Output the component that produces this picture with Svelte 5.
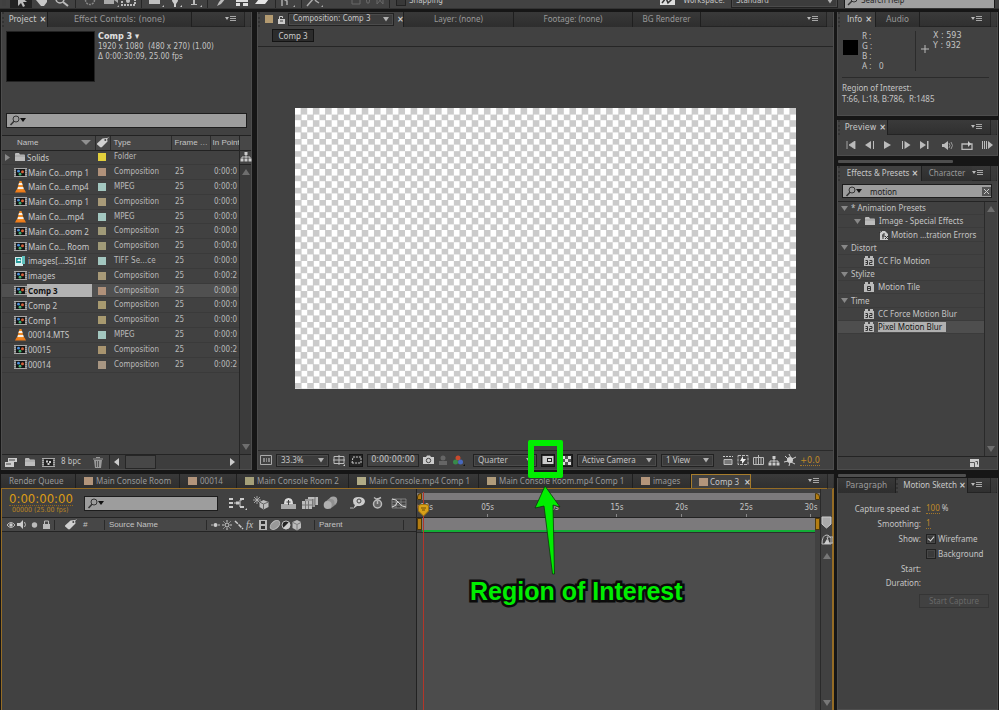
<script>
  const items = [
    { name: 'Solids', icon: 'folder', tag: '#e2cf3c', type: 'Folder', fps: '', start: '' },
    { name: 'Main Co…omp 1', icon: 'comp', tag: '#b0917a', type: 'Composition', fps: '25', start: '0:00:0' },
    { name: 'Main Co…e.mp4', icon: 'cone', tag: '#a3c7c0', type: 'MPEG', fps: '25', start: '0:00:0' },
    { name: 'Main Co…omp 1', icon: 'comp', tag: '#a89a78', type: 'Composition', fps: '25', start: '0:00:0' },
    { name: 'Main Co….mp4', icon: 'cone', tag: '#a3c7c0', type: 'MPEG', fps: '25', start: '0:00:0' },
    { name: 'Main Co…oom 2', icon: 'comp', tag: '#a09a78', type: 'Composition', fps: '25', start: '0:00:0' },
    { name: 'Main Co… Room', icon: 'comp', tag: '#a09a78', type: 'Composition', fps: '25', start: '0:00:0' },
    { name: 'images[…35].tif', icon: 'tif', tag: '#a3c7c0', type: 'TIFF Se…ce', fps: '25', start: '0:00:0' },
    { name: 'images', icon: 'comp', tag: '#a89a78', type: 'Composition', fps: '25', start: '0:00:2' },
    { name: 'Comp 3', icon: 'comp', tag: '#b0917a', type: 'Composition', fps: '25', start: '0:00:0', selected: true },
    { name: 'Comp 2', icon: 'comp', tag: '#a89a70', type: 'Composition', fps: '25', start: '0:00:0' },
    { name: 'Comp 1', icon: 'comp', tag: '#a89a70', type: 'Composition', fps: '25', start: '0:00:0' },
    { name: '00014.MTS', icon: 'cone', tag: '#a3c7c0', type: 'MPEG', fps: '25', start: '0:00:0' },
    { name: '00015', icon: 'comp', tag: '#a8946f', type: 'Composition', fps: '25', start: '0:00:2' },
    { name: '00014', icon: 'comp', tag: '#a89682', type: 'Composition', fps: '25', start: '0:00:2' }
  ];
  const effects = [
    { label: '* Animation Presets', depth: 0, icon: '' },
    { label: 'Image - Special Effects', depth: 1, icon: 'folder' },
    { label: 'Motion …tration Errors', depth: 3, icon: 'preset' },
    { label: 'Distort', depth: 0, icon: '' },
    { label: 'CC Flo Motion', depth: 2, icon: '32' },
    { label: 'Stylize', depth: 0, icon: '' },
    { label: 'Motion Tile', depth: 2, icon: '8' },
    { label: 'Time', depth: 0, icon: '' },
    { label: 'CC Force Motion Blur', depth: 2, icon: '32' },
    { label: 'Pixel Motion Blur', depth: 2, icon: '32', selected: true }
  ];
  const comps = [
    { label: 'Render Queue', width: 75 },
    { label: 'Main Console Room', width: 104, tag: '#b3957b' },
    { label: '00014', width: 57, tag: '#b3957b' },
    { label: 'Main Console Room 2', width: 112, tag: '#a5a079' },
    { label: 'Main Console.mp4 Comp 1', width: 130, tag: '#b1ab86' },
    { label: 'Main Console Room.mp4 Comp 1', width: 154, tag: '#b19c7b' },
    { label: 'images', width: 58, tag: '#b3957b' }
  ];
  const ticks = ['0:00s', '05s', '10s', '15s', '20s', '25s', '30s'];
</script>

{#snippet menu()}
  <button class="menu" aria-label="Panel menu">
    <svg width="12" height="8" viewBox="0 0 12 8"><path d="M0 2h4L2 5z" fill="#bbb" /><path d="M5 1h6v1H5zM5 3h6v1H5zM5 5h6v1H5z" fill="#a6a6a6" /></svg>
  </button>
  <i class="grip end"></i>
{/snippet}

{#snippet lens()}
  <svg class="lens" width="20" height="11" viewBox="0 0 20 11"><circle cx="7" cy="4" r="3" fill="none" stroke="#333" /><path d="M5 6.3L1.500 10" stroke="#333" stroke-width="1.500" /><path d="M11 3h6l-3 4z" fill="#111" /></svg>
{/snippet}

{#snippet folder()}
  <svg width="12" height="10" viewBox="0 0 12 10"><path d="M1 2q0-1 1-1h3l1 1.500h4q1 0 1 1V9H1z" fill="#bcbcbc" /><path d="M1 4h10" stroke="#8a8a8a" stroke-width=".6" /></svg>
{/snippet}

{#snippet film()}
  <svg width="13" height="11" viewBox="0 0 13 11"><path d="M0 1h13v9H0z" fill="#a8a8a8" /><path d="M2 2h9v7H2z" fill="#141414" /><path d="M1 2v8M12 2v8" stroke="#555" stroke-dasharray="1 1" /><circle cx="4.500" cy="4.200" r="1.400" fill="#4b8fdc" /><circle cx="8.500" cy="4.800" r="1.500" fill="#d2603a" /><circle cx="6" cy="7.200" r="1.400" fill="#3fae6c" /></svg>
{/snippet}

{#snippet fileIcon(kind)}
  {#if kind === 'folder'}
    {@render folder()}
  {:else if kind === 'comp'}
    {@render film()}
  {:else if kind === 'cone'}
    <svg width="13" height="13" viewBox="0 0 13 13"><path d="M2.500 9.500h8l1.500 3H1z" fill="#ee7c1a" /><path d="M5.500 1h2l2.500 9q-3.500 1.500-7 0z" fill="#f08a24" /><path d="M5 3h3l.6 2H4.400zM4 7h5.200l.5 2H3.400z" fill="#f4efe8" /></svg>
  {:else}
    <svg width="13" height="12" viewBox="0 0 13 12"><path d="M1 2h8v9H1z" fill="#d8eeee" /><path d="M2 3h5v5H2z" fill="#269a9a" /><path d="M8 1h3v8H8z" fill="#5fc0bc" /><path d="M3 6l2-2 2 2z" fill="#fff" /></svg>
  {/if}
{/snippet}

{#snippet tagIcon()}
  <svg width="13" height="11" viewBox="0 0 13 11"><path d="M1 6.500L6.500 1.500 11 1l.5 3.500L6 10q-1 .8-2 0L1.200 7.500z" fill="#d0d0d0" /><circle cx="9.300" cy="3" r="1" fill="#444" /><path d="M10 2.500L12.500.500" stroke="#ccc" stroke-width=".8" /></svg>
{/snippet}

{#snippet tree()}
  <svg width="12" height="11" viewBox="0 0 12 11"><path d="M4.500 1h3v3h-3zM.500 7.500h3v3h-3zM8.500 7.500h3v3h-3zM4.500 7.500h3v3h-3z" fill="#ccc" /><path d="M6 4v3M2 7.500V6h8v1.500" fill="none" stroke="#ccc" /></svg>
{/snippet}

{#snippet drop(label, options, cls)}
  <span class="drop {cls}">
    <select aria-label={label}>
      {#each options as o}<option>{o}</option>{/each}
    </select>
    <svg width="8" height="5" viewBox="0 0 8 5"><path d="M1 0h6L4 4.500z" fill="#b0b0b0" /></svg>
  </span>
{/snippet}

<div class="app">
  <header class="toolbar">
    <div class="tools">
      <i class="grip"></i>
      <button class="on" aria-label="Selection"><svg width="20" height="16"><path d="M7 1v12l3-3 2 4 2-1-2-4h4z" fill="#bdbdbd" /></svg></button>
      <button aria-label="Hand"><svg width="20" height="16"><path d="M5 3l10-1v7l-3 4H9L4 7z" fill="#c8c8c8" /></svg></button>
      <button aria-label="Zoom"><svg width="20" height="16"><circle cx="8" cy="6" r="4" fill="none" stroke="#bbb" stroke-width="1.500" /><path d="M11 9l5 4" stroke="#bbb" stroke-width="2" /></svg></button>
      <hr />
      <button aria-label="Rotate"><svg width="24" height="16"><circle cx="12" cy="7" r="4.500" fill="none" stroke="#888" stroke-width="1.500" stroke-dasharray="2 1" /></svg></button>
      <button aria-label="Camera"><svg width="18" height="16"><path d="M2 4h10v7H2zM12 7l4-2v5zM15 14h2v-2z" fill="#aaa" /></svg></button>
      <button aria-label="Pan behind"><svg width="18" height="16"><path d="M2 4h13v8H2z" fill="none" stroke="#bbb" stroke-width="2" stroke-dasharray="2 1" /><circle cx="8" cy="8" r="2" fill="#bbb" /></svg></button>
      <hr />
      <button aria-label="Rectangle"><svg width="22" height="16"><path d="M5 4h11v7H5zM18 14h2v-2z" fill="#c0c0c0" /></svg></button>
      <button aria-label="Pen"><svg width="18" height="16"><path d="M7 2h4l1 6-2 3v3H8v-3L6 8zM14 14h2v-2z" fill="#ccc" /></svg></button>
      <button aria-label="Type"><svg width="20" height="16"><path d="M9 2h2v9h2v1H7v-1h2zM16 14h2v-2z" fill="#bbb" /></svg></button>
      <hr />
      <button aria-label="Brush"><svg width="22" height="16"><path d="M14 3l2 2-5 6-4 2 2-4z" fill="#bbb" /></svg></button>
      <button aria-label="Clone stamp"><svg width="20" height="16"><path d="M4 6h12v3H4zM4 10h4v3H4zM11 10h5v3h-5z" fill="#ddd" /></svg></button>
      <button aria-label="Eraser"><svg width="20" height="16"><path d="M7 6h10l-4 5H3z" fill="#e5e5e5" /></svg></button>
      <hr />
      <button aria-label="Roto brush"><svg width="20" height="16"><path d="M4 13V5l5 3v4M10 3l2 3" fill="none" stroke="#aaa" stroke-width="1.500" /><path d="M15 14h2v-2z" fill="#aaa" /></svg></button>
      <hr />
      <button aria-label="Puppet pin"><svg width="20" height="16"><path d="M3 13l7-8 2 3 3 2" fill="none" stroke="#aaa" stroke-width="1.500" /><path d="M17 14h2v-2z" fill="#aaa" /></svg></button>
      <span class="axes"><svg width="36" height="16"><path d="M2 5h8v6H2zM16 5h4l-1 5h-2zM27 4l6 7v-7l-6 7z" fill="none" stroke="#686868" /></svg></span>
      <hr />
      <label class="snap"><input type="checkbox" /> Snapping</label>
      <span class="fill"></span>
      <button aria-label="Sync"><svg width="18" height="16"><path d="M1 3h15v9H1z" fill="#ddd" /><path d="M3 10l4-5 2 5 4-4" fill="none" stroke="#333" stroke-width="1.500" /></svg></button>
      <label class="ws" for="workspace">Workspace:</label>
      <span class="drop workspace">
        <select id="workspace"><option>Standard</option></select>
        <svg width="8" height="5" viewBox="0 0 8 5"><path d="M1 0h6L4 4.500z" fill="#b0b0b0" /></svg>
      </span>
      <div class="help">
        <svg width="14" height="12"><circle cx="9" cy="4" r="3" fill="none" stroke="#333" /><path d="M7 6l-4 4" stroke="#333" stroke-width="1.500" /></svg>
        <input type="text" value="Search Help" aria-label="Search Help" />
      </div>
    </div>
  </header>

  <main>
    <div class="work">
      <div class="upper">
        <section class="panel project">
          <nav class="tabs">
            <i class="grip"></i>
            <button class="tab on first">Project <b>×</b></button>
            <button class="tab fx-controls">Effect Controls: (none)</button>
            <span class="fill"></span>
            {@render menu()}
          </nav>
          <div class="summary">
            <div class="thumb"></div>
            <div>
              <strong>Comp 3 ▾</strong>
              <p>1920 x 1080&nbsp; (480 x 270) (1.00)</p>
              <p>Δ 0:00:30:09, 25.00 fps</p>
            </div>
          </div>
          <div class="field find">{@render lens()}<input type="text" aria-label="Search project" /></div>
          <div class="listing">
            <div class="rows">
              <table>
                <colgroup><col class="c-name" /><col class="c-tag" /><col class="c-type" /><col class="c-fps" /><col class="c-in" /></colgroup>
                <thead>
                  <tr>
                    <th><span class="namehead">Name <svg width="10" height="5"><path d="M0 0h10L5 5z" fill="#909090" /></svg></span></th>
                    <th>{@render tagIcon()}</th><th>Type</th><th>Frame …</th><th>In Point</th>
                  </tr>
                </thead>
                <tbody>
                  {#each items as it}
                    <tr class:selected={it.selected}>
                      <td>
                        <span class="entry">
                          <span class="twist">{#if it.icon === 'folder'}<svg width="5" height="7"><path d="M0 0l5 3.500L0 7z" fill="#888" /></svg>{/if}</span>
                          {@render fileIcon(it.icon)}
                          <span class="label">{it.name}</span>
                        </span>
                      </td>
                      <td><i class="swatch" style:background={it.tag}></i></td>
                      <td>{it.type}</td>
                      <td>{it.fps}</td>
                      <td>{it.start}</td>
                    </tr>
                  {/each}
                </tbody>
              </table>
            </div>
            <div class="vscroll">
              <div class="headcap"></div>
              <div class="flow">{@render tree()}</div>
              <div class="track"><svg width="8" height="6"><path d="M0 6h8L4 0z" fill="#6e6e6e" /></svg><svg width="8" height="6"><path d="M0 0h8L4 6z" fill="#6e6e6e" /></svg></div>
            </div>
          </div>
          <footer class="foot">
            <button aria-label="Interpret footage"><svg width="14" height="11"><path d="M4 1h9v4H4zM1 5h9v5H1z" fill="#ccc" /><path d="M2 7h5M5 3h6" stroke="#444" /></svg></button>
            <button aria-label="New folder">{@render folder()}</button>
            <button aria-label="New composition"><svg width="13" height="11"><path d="M0 1h13v9H0z" fill="#aaa" /><path d="M2 2h9v7H2z" fill="#222" /><path d="M1 2v8M12 2v8" stroke="#444" stroke-dasharray="1 1" /><path d="M4 3.500h2v2H4zM7 4h2v2H7zM5.500 6h2v2h-2z" fill="#ccc" /></svg></button>
            <button class="depth">8 bpc</button>
            <button aria-label="Delete"><svg width="10" height="11"><path d="M1 3h8l-1 8H2zM0 1.500h10v1H0zM3 0h4v1H3z" fill="#999" /><path d="M3.500 4v6M5.500 4v6" stroke="#555" /></svg></button>
            <div class="hscroll"><svg width="5" height="8"><path d="M5 0v8L0 4z" fill="#ccc" /></svg><i></i><span class="fill"></span><svg width="5" height="8"><path d="M0 0v8l5-4z" fill="#ccc" /></svg></div>
          </footer>
        </section>

        <section class="panel viewer">
          <nav class="tabs">
            <i class="grip"></i>
            <div class="tab on comp-tab">
              <i class="swatch" style:background="#b39a70"></i>
              <svg width="7" height="9"><path d="M0 4h7v5H0z" fill="#ccc" /><path d="M1.500 4V1.500h3V3" fill="none" stroke="#ccc" /><path d="M2 6h3" stroke="#444" /></svg>
              {@render drop('Composition', ['Composition: Comp 3'], 'comp-drop')}
              <b>×</b>
            </div>
            <button class="tab w110">Layer: (none)</button>
            <button class="tab w119">Footage: (none)</button>
            <button class="tab w68">BG Renderer</button>
            <span class="fill"></span>
            {@render menu()}
          </nav>
          <div class="crumbs"><button>Comp 3</button></div>
          <div class="stage"><div class="canvas"></div></div>
          <footer class="viewbar">
            <button aria-label="Always preview"><svg width="12" height="10"><path d="M.500.500h11v9H.500z" fill="none" stroke="#aaa" /><path d="M3 3h2v4H3zM6 3h1v4H6zM8 3h2v4H8z" fill="#888" /></svg></button>
            {@render drop('Magnification', ['33.3%'], 'zoomdrop')}
            <button aria-label="Guides"><svg width="12" height="11"><path d="M1 1.500h10v7H1zM6 0v10M0 5h12" fill="none" stroke="#bbb" /><path d="M10 11h2V9z" fill="#ccc" /></svg></button>
            <button class="pressed" aria-label="Mask visibility"><svg width="12" height="10"><path d="M2 8L3 2h8v6z" fill="none" stroke="#ccc" stroke-dasharray="2 1" /></svg></button>
            <button class="time">0:00:00:00</button>
            <button aria-label="Snapshot"><svg width="11" height="10"><path d="M0 2h3l1-1.500h3L8 2h3v7H0z" fill="#ccc" /><circle cx="5.500" cy="5.500" r="2.200" fill="none" stroke="#444" /></svg></button>
            <button aria-label="Show snapshot"><svg width="10" height="11"><circle cx="5" cy="3" r="2.500" fill="#666" /><path d="M1 6h8v4H1z" fill="#666" /></svg></button>
            <button class="channels" aria-label="Channels"><svg width="13" height="11"><circle cx="6" cy="3" r="2.500" fill="#c9492c" /><circle cx="3.500" cy="7" r="2.500" fill="#388a4a" /><circle cx="8.500" cy="7" r="2.500" fill="#4768bd" /><path d="M11 11h2V9z" fill="#111" /></svg></button>
            {@render drop('Resolution', ['Quarter'], 'resdrop')}
            <button class="pressed" aria-label="Region of Interest"><svg width="12" height="10"><path d="M.500 1h11v8H.500z" fill="#ccc" /><path d="M5 3h5v4H5z" fill="#222" /><path d="M6 4h3v2H6z" fill="#ddd" /></svg></button>
            <button class="pressed" aria-label="Transparency grid"><svg width="9" height="9"><path d="M0 0h9v9H0z" fill="#555" /><path d="M0 0h3v3H0zM6 0h3v3H6zM3 3h3v3H3zM0 6h3v3H0zM6 6h3v3H6z" fill="#ddd" /></svg></button>
            {@render drop('3D view', ['Active Camera'], 'camdrop')}
            {@render drop('View layout', ['1 View'], 'viewdrop')}
            <div class="extras">
              <button aria-label="Pixel aspect"><svg width="10" height="11"><path d="M1 4.500h8v5H1z" fill="#777" stroke="#bbb" /><path d="M0 1.500h10" stroke="#ccc" stroke-dasharray="2 1" /></svg></button>
              <button aria-label="Fast previews"><svg width="12" height="10"><path d="M1 .500h10v9H1z" fill="none" stroke="#bbb" stroke-dasharray="3 1" /><path d="M6 1v3h3L5 9V6H3z" fill="#eee" /></svg></button>
              <button aria-label="Timeline"><svg width="11" height="10"><path d="M.500 2.500h10v7H.500zM3 3v6M5.500 0v9M8 3v6" fill="none" stroke="#bbb" /></svg></button>
              <button aria-label="Flowchart">{@render tree()}</button>
              <button aria-label="Reset exposure"><svg width="12" height="12"><circle cx="6" cy="6" r="3" fill="#ccc" /><path d="M5 0l2 4M12 3L8 5M11 10L7 8M5 12l1-4M0 8l4-1M1 2l3 3" stroke="#ccc" /></svg></button>
              <button class="hot">+0.0</button>
            </div>
          </footer>
        </section>
      </div>

      <section class="timeline">
        <nav class="tabs comps">
          {#each comps as c}
            <button class="tab" style:width="{c.width}px">{#if c.tag}<i class="swatch" style:background={c.tag}></i>{/if}{c.label}</button>
          {/each}
          <button class="tab on current"><i class="grip"></i><i class="swatch" style:background="#b3957b"></i>Comp 3 <b>×</b></button>
          <span class="fill"></span>
          {@render menu()}
        </nav>
        <div class="frame">
          <div class="layers">
            <div class="controls">
              <div class="clock"><button class="now">0:00:00:00</button><small>00000 (25.00 fps)</small></div>
              <div class="field seek">{@render lens()}<input type="text" aria-label="Search layers" /></div>
              <div class="switches">
                <button aria-label="Mini flowchart"><svg width="19" height="13"><path d="M1 2h5M1 6h5M1 10h5M12 2h5M12 10h5" stroke="#ccc" stroke-width="2" stroke-dasharray="4 1" /><path d="M6 6h6M12 6V3h2M12 6v4" stroke="#ccc" fill="none" /><path d="M8 4.500h3v3H8zM17 13h2v-2z" fill="#ccc" /></svg></button>
                <button aria-label="Draft 3D"><svg width="17" height="14"><path d="M4 0v8M0 4h8M1 1l6 6M7 1L1 7" stroke="#bbb" stroke-width=".8" /><path d="M10.500 4l5 2v5l-5 2.500-4-2.500V6z" fill="#bbb" /><path d="M6.500 6l4 2 5-2M10.500 8v5" fill="none" stroke="#666" /></svg></button>
                <button class="shy" aria-label="Hide shy layers"><svg width="15" height="13"><path d="M0 7h15v5H0z" fill="#aaa" /><path d="M3 7q0-6 4.500-6T12 7z" fill="#ddd" /><path d="M7.500 3v5M5.500 5h4" stroke="#444" /></svg></button>
                <button aria-label="Frame blending"><svg width="16" height="14"><path d="M6 1h10v8H6z" fill="#bbb" /><path d="M3 3h10v8H3z" fill="#999" /><path d="M0 5h10v8H0z" fill="#bbb" /><path d="M3.500 5v8M6.500 5v8M0 9h10" stroke="#777" /><path d="M13 1v8M10.500 3v8" stroke="#777" /></svg></button>
                <button aria-label="Motion blur"><svg width="15" height="14"><path d="M7.500 1.500L2 6l5 7 6.500-5z" fill="#888" /><circle cx="10.300" cy="4.500" r="4" fill="#a4a4a4" /><circle cx="7.500" cy="7" r="4" fill="#909090" /><circle cx="4.700" cy="9" r="4" fill="#b0b0b0" /></svg></button>
                <button class="brain" aria-label="Brainstorm"><svg width="16" height="14"><path d="M3 5q0-4 5.500-4T15 5q0 4-5 5l-3 0-4 3 2-4Q3 8 3 5z" fill="#ccc" /><circle cx="9" cy="5" r="2" fill="none" stroke="#444" /><path d="M0 12h3" stroke="#bbb" /></svg></button>
                <button aria-label="Auto-keyframe"><svg width="14" height="14"><circle cx="6.500" cy="8" r="4" fill="#666" stroke="#bbb" stroke-width="1.500" /><path d="M3 1.500l3 2 4-2M6.500 2v2M6.500 8V5" stroke="#bbb" fill="none" stroke-width="1.500" /></svg></button>
                <button aria-label="Graph editor"><svg width="16" height="13"><path d="M1 2h14v9H1zM1 5h14M1 8h14M5 2v9M10 2v9" fill="none" stroke="#999" stroke-width=".7" /><path d="M1 2q4 0 7 4t7 4M1 10Q5 10 7 4" fill="none" stroke="#ddd" /></svg></button>
              </div>
            </div>
            <div class="heads">
              <svg width="48" height="12"><path d="M1 6q4-5 8 0q-4 5-8 0z" fill="none" stroke="#bbb" /><circle cx="5" cy="6" r="1.700" fill="#ccc" /><path d="M11 4h3l3-3v9l-3-3h-3z" fill="#ccc" /><path d="M18.500 3q2 3 0 5" fill="none" stroke="#bbb" /><circle cx="28.500" cy="6" r="2.700" fill="#bbb" /><path d="M37 5h7v5h-7z" fill="#bbb" /><path d="M38.500 5V2h4v3" fill="none" stroke="#bbb" /></svg>
              <span class="c labels">{@render tagIcon()}<em>#</em></span>
              <span class="c source">Source Name</span>
              <span class="c modes">
                <svg width="92" height="12"><path d="M0 6h2M7 6h2" stroke="#bbb" /><circle cx="4.500" cy="6" r="2" fill="#ccc" /><circle cx="16" cy="6" r="2" fill="none" stroke="#ccc" /><path d="M16 1v2M16 9v2M11 6h2M19 6h2M12.500 2.500l1 1M19.500 2.500l-1 1M12.500 9.500l1-1M19.500 9.500l-1-1" stroke="#ccc" /><path d="M24 2l8 8" stroke="#ccc" stroke-width="1.500" stroke-dasharray="4 1" /><path d="M48 1h8v10h-8z" fill="#bbb" /><path d="M50 2h4v3h-4zM50 7h4v3h-4z" fill="#333" /><ellipse cx="64" cy="6" rx="5.500" ry="3.500" fill="#999" stroke="#bbb" transform="rotate(-40 64 6)" /><circle cx="75" cy="6" r="4" fill="#222" stroke="#bbb" /><path d="M72 9l6-6a4 4 0 0 1-6 6z" fill="#ccc" /><path d="M86 1l4 2v6l-4 2.500-4.500-2.500V3z" fill="#bbb" /><path d="M82 3.500l4 2 4-2M86 6v5" fill="none" stroke="#777" /></svg>
                <i class="fx">fx</i>
              </span>
              <span class="c parent">Parent</span>
            </div>
            <div class="void"></div>
          </div>
          <div class="tracks">
            <div class="navigator"><i></i><i></i></div>
            <div class="ruler">{#each ticks as t}<span>{t}</span>{/each}</div>
            <div class="workarea"><i></i><i></i></div>
            <div class="cache"></div>
            <div class="lane"></div>
            <div class="playline"></div>
            <svg class="playhead" width="11" height="13"><path d="M.500 1.500L3 .500h5l2.500 1v5.500l-5 5-5-5z" fill="#d9a018" stroke="#9b7212" /><path d="M3 4h5M4 6h3" stroke="#6b4c08" /></svg>
          </div>
          <div class="gutter">
            <svg width="11" height="13"><path d="M1 1h9v7l-4.500 4L1 8z" fill="#aaa" stroke="#ccc" /></svg>
            <svg width="12" height="12"><path d="M1 11q0-9 5-9 2 0 4 3v6zM6 4h6v6H8z" fill="none" stroke="#bbb" /><path d="M3 11l3-5 3 5z" fill="#ccc" /></svg>
            <div class="track"><svg width="8" height="6"><path d="M0 6h8L4 0z" fill="#777" /></svg><svg width="8" height="6"><path d="M0 0h8L4 6z" fill="#777" /></svg></div>
          </div>
        </div>
      </section>
    </div>

    <aside>
      <section class="panel info">
        <nav class="tabs"><i class="grip"></i><button class="tab on w32">Info <b>×</b></button><button class="tab w44">Audio</button><span class="fill"></span>{@render menu()}</nav>
        <div class="readout">
          <i class="chip"></i>
          <dl><dt>R :</dt><dd></dd><dt>G :</dt><dd></dd><dt>B :</dt><dd></dd><dt>A :</dt><dd>0</dd></dl>
          <div class="pos"><svg width="8" height="8"><path d="M4 0v8M0 4h8" stroke="#bbb" /></svg><div><p>X : 593</p><p>Y : 932</p></div></div>
        </div>
        <div class="region"><p>Region of Interest:</p><p>T:66, L:18, B:786,&nbsp; R:1485</p></div>
      </section>

      <section class="panel preview">
        <nav class="tabs"><i class="grip"></i><button class="tab on w42">Preview <b>×</b></button><span class="fill"></span>{@render menu()}</nav>
        <div class="transport">
          <button aria-label="First frame"><svg width="10" height="8"><path d="M1 0v8M9 0v8L3 4z" fill="#bbb" stroke="#bbb" stroke-width=".8" /></svg></button>
          <button aria-label="Previous frame"><svg width="10" height="8"><path d="M6 0v8L0 4zM8 0h1v8H8z" fill="#bbb" /></svg></button>
          <button aria-label="Play"><svg width="9" height="8"><path d="M1 0v8l7-4z" fill="#bbb" /></svg></button>
          <button aria-label="Next frame"><svg width="10" height="8"><path d="M3.500 0v8l6-4zM1 0h1v8H1z" fill="#bbb" /></svg></button>
          <button aria-label="Last frame"><svg width="10" height="8"><path d="M1 0v8l6-4zM8 0h1.500v8H8z" fill="#bbb" /></svg></button>
          <button class="mute" aria-label="Mute"><svg width="12" height="9"><path d="M1 3h2l4-3v9L3 6H1z" fill="#bbb" /><path d="M8 2q2 2.500 0 5M10 1q3 3.500 0 7" fill="none" stroke="#999" /></svg></button>
          <button aria-label="Loop"><svg width="12" height="9"><path d="M3 3H1v5.500h10V3H9M3 3h5" fill="none" stroke="#bbb" stroke-width="1.300" /><path d="M7 0l3 3-3 3z" fill="#ccc" /></svg></button>
          <button aria-label="RAM preview"><svg width="12" height="8"><path d="M0 0h1v8H0zM2 0h1v8H2zM4 0h1v8H4zM6 0v8l5-4z" fill="#bbb" /></svg></button>
        </div>
      </section>
      <div class="slider one"></div>

      <section class="panel effects">
        <nav class="tabs"><i class="grip"></i><button class="tab on w76">Effects &amp; Presets <b>×</b></button><button class="tab w50">Character</button><span class="fill"></span>{@render menu()}</nav>
        <div class="field filter">{@render lens()}<input type="text" value="motion" aria-label="Search effects" /><button aria-label="Clear"><svg width="9" height="9"><path d="M0 0h9v9H0z" fill="#555" /><path d="M2 2l5 5M7 2L2 7" stroke="#ccc" /></svg></button></div>
        <div class="browser">
          <ul>
            {#each effects as e}
              <li class="d{e.depth}" class:selected={e.selected}>
                {#if e.depth < 2}<svg width="7" height="5"><path d="M0 0h7L3.500 5z" fill="#888" /></svg>{/if}
                {#if e.icon === 'folder'}
                  {@render folder()}
                {:else if e.icon === 'preset'}
                  <svg width="10" height="10"><path d="M1 1h5l3 3v6H1z" fill="#ccc" /><path d="M0 3l3-2M6 4H4v5M3 6h3M6 6l3 3M9 6L6 9" stroke="#333" fill="none" /></svg>
                {:else if e.icon}
                  <svg width="10" height="10"><path d="M0 2h10v8H0zM1 0h3v3H1zM6 0h3v3H6z" fill="#bbb" /><path d={e.icon === '8' ? 'M3.500 4.500h3v4h-3zM3.500 6.500h3' : 'M1.500 4.500h2v4h-2M1.500 6.500h2M5.500 4.500h2.500v2H5.500v2H8.500'} fill="none" stroke="#333" /></svg>
                {/if}
                <span>{e.label}</span>
              </li>
            {/each}
          </ul>
          <div class="track"><svg width="8" height="6"><path d="M0 6h8L4 0z" fill="#6e6e6e" /></svg><svg width="8" height="6"><path d="M0 0h8L4 6z" fill="#6e6e6e" /></svg></div>
        </div>
        <footer><button aria-label="New bin"><svg width="9" height="8"><path d="M0 0h9v8H0z" fill="#ccc" /><path d="M0 3.500h4.500V8M5.500 2.500h2v3" fill="none" stroke="#555" /></svg></button></footer>
      </section>
      <div class="slider two"></div>

      <section class="panel sketch">
        <nav class="tabs"><button class="tab w58">Paragraph</button><i class="grip"></i><button class="tab on w66">Motion Sketch <b>×</b></button><span class="fill"></span>{@render menu()}</nav>
        <div class="form">
          <span class="k">Capture speed at:</span><span><button class="hot">100</button> %</span>
          <span class="k">Smoothing:</span><span><button class="hot">1</button></span>
          <span class="k">Show:</span><label><input type="checkbox" checked /> Wireframe</label>
          <span></span><label><input type="checkbox" /> Background</label>
          <span class="k">Start:</span><span></span>
          <span class="k">Duration:</span><span></span>
        </div>
        <button class="capture" disabled>Start Capture</button>
      </section>
    </aside>
  </main>

  <div class="note">
    <div class="box"></div>
    <svg class="arrow" width="28" height="92" viewBox="0 0 28 92"><path d="M11 1L26 22l-7-2 1.500 69h-2L10 21l-9 2z" fill="#00ee00" stroke="#0a3a0a" stroke-width=".8" /></svg>
    <p>Region of Interest</p>
  </div>
</div>

<style>
  :global(body) { margin: 0; background: #161616; }
  .app { --wide: "Noto Sans", "DejaVu Sans Condensed", sans-serif; position: relative; display: flex; flex-direction: column; height: 100vh; overflow: hidden; background: #161616; color: #c4c4c4; font: 9px/10px "DejaVu Sans Condensed", "Liberation Sans", sans-serif; }
  .app :global(*) { box-sizing: border-box; }
  button, input, select { font: inherit; color: inherit; margin: 0; padding: 0; border: 0; background: none; border-radius: 0; outline: 0; }
  button { display: inline-flex; align-items: center; justify-content: center; white-space: nowrap; }
  svg { display: block; flex: none; }
  p, dl, dd, ul { margin: 0; padding: 0; }
  b { font: 700 9px/10px "DejaVu Sans Condensed", sans-serif; color: #ccc; margin-left: 3px; }
  .fill { flex: 1; }
  .grip { flex: none; width: 4px; height: 9px; margin: 0 1px 0 2px; background: radial-gradient(#222 40%, #5a5a5a 60%) 0 0 / 2px 2px; opacity: .6; }
  .grip.end { width: 6px; margin: 0 1px; height: 15px; border-left: 1px solid #1b1b1b; }
  .swatch { display: block; flex: none; width: 8px; height: 8px; }
  .hot { color: #c08a28; border-bottom: 1px dotted #a2762a; }

  .toolbar { flex: none; height: 9px; overflow: hidden; background: #424242; border-bottom: 1px solid #333; }
  .tools { display: flex; align-items: center; height: 22px; margin-top: -10px; padding-right: 4px; }
  .tools button.on { height: 20px; background: #232323; width: 22px; margin-left: 3px; }
  .tools hr { width: 1px; height: 22px; border: 0; margin: 0 2px 0 3px; background: #262626; flex: none; }
  .axes { margin-left: 26px; }
  .snap { display: flex; align-items: center; gap: 3px; margin-left: 4px; font-size: 8px; }
  .snap input { appearance: none; width: 10px; height: 10px; border: 1px solid #222; background: #383838; }
  .ws { margin: 0 6px; font-size: 8px; }
  .help { display: flex; align-items: center; width: 151px; height: 15px; margin-left: 6px; background: #a0a0a0; border: 1px solid #1a1a1a; color: #222; font-size: 8px; }
  .help input { flex: 1; min-width: 0; margin-left: 2px; }

  .drop { display: flex; align-items: center; height: 13px; border: 1px solid #222; background: #3c3c3c; box-shadow: inset 0 0 0 1px #4b4b4b; position: relative; flex: none; }
  .drop select { appearance: none; width: 100%; height: 100%; padding-left: 4px; font-size: 8px; line-height: 10px; }
  .drop svg { position: absolute; right: 3px; pointer-events: none; }
  .workspace { width: 107px; }

  main { flex: 1; min-height: 0; display: flex; gap: 3px; padding: 3px 1px 0 1px; }
  .work { flex: 1; min-width: 0; display: flex; flex-direction: column; gap: 4px; }
  .upper { flex: 458 1 0; min-height: 0; display: flex; gap: 5px; }
  .panel { display: flex; flex-direction: column; background: #414141; border: 1px solid #4d4d4d; border-top: 0; min-height: 0; }
  .project { flex: none; width: 251px; }
  .viewer { flex: 1; min-width: 0; }

  .tabs { flex: none; display: flex; align-items: center; height: 15px; background: linear-gradient(#3a3a3a, #303030); border-bottom: 1px solid #242424; }
  .tab { height: 15px; color: #999; border-right: 1px solid #1f1f1f; flex: none; background: linear-gradient(#383838, #2e2e2e); }
  .tab.on { background: #414141; color: #c8c8c8; }
  .tabs > .grip:not(.end) { height: 15px; width: 6px; margin: 0; background: #414141; opacity: 1; border-left: 2px dotted #333; }
  .menu { width: 14px; height: 14px; margin-right: 5px; }
  .first { width: 40px; }
  .fx-controls { width: 144px; }
  .comp-tab { display: flex; align-items: center; width: 140px; padding-left: 1px; gap: 3px; }
  .comp-tab .swatch { margin-right: 2px; }
  .comp-drop { width: 106px; }
  .comp-tab b { margin: 0; }
  .w110 { width: 110px; } .w119 { width: 119px; } .w68 { width: 68px; }
  .w110, .w119, .w68 { font: 8px/10px var(--wide); }

  .summary { display: flex; gap: 3px; padding: 4px 3px 0 4px; height: 86px; }
  .thumb { width: 89px; height: 51px; background: #000; border: 1px solid #222; }
  .summary strong { display: block; color: #e0e0e0; line-height: 11px; }
  .summary p { white-space: nowrap; font-size: 8px; }
  .field { display: flex; align-items: center; background: #9d9d9d; border: 1px solid #1d1d1d; height: 15px; color: #1c1c1c; }
  .field input { flex: 1; min-width: 0; height: 100%; }
  .lens { margin-left: 2px; }
  .find { margin: 0 4px 7px 4px; }
  .listing { flex: 1; min-height: 0; display: flex; border-top: 1px solid #222; }
  .rows { flex: 1; min-width: 0; overflow: hidden; }
  table { border-collapse: collapse; table-layout: fixed; width: 100%; font-size: 8px; line-height: 10px; }
  .c-name { width: 93px; } .c-tag { width: 15px; } .c-type { width: 61px; } .c-fps { width: 39px; }
  th { height: 14px; padding: 0 0 0 3px; text-align: left; font: 8px/10px "Liberation Sans", Arial, sans-serif; background: #474747; border-right: 1px solid #2b2b2b; border-bottom: 1px solid #222; white-space: nowrap; }
  th:nth-child(2) { padding: 0; }
  th:last-child { padding-left: 2px; border-right: 0; }
  .namehead { display: flex; align-items: center; justify-content: space-between; padding: 0 4px 0 12px; }
  tbody { height: 222px; }
  td { height: 14px; padding: 0 0 0 4px; border-bottom: 1px solid #3a3a3a; white-space: nowrap; color: #bababa; }
  td:first-child { padding: 0; }
  td:nth-child(2) { padding: 0 0 0 3px; }
  .entry { display: flex; align-items: center; height: 13px; margin-right: 3px; }
  .twist { width: 12px; padding-left: 3px; flex: none; }
  .label { flex: 1; padding-left: 1px; font: 8px/13px var(--wide); color: #c8c8c8; }
  tr.selected { background: #505050; }
  tr.selected .label { background: #b2b2b2; color: #111; font-weight: 700; }
  .vscroll { width: 12px; display: flex; flex-direction: column; background: #3b3b3b; border-left: 1px solid #262626; }
  .headcap { height: 15px; background: #474747; border-bottom: 1px solid #222; }
  .flow { height: 14px; background: #444; border-bottom: 1px solid #222; }
  .track { flex: 1; display: flex; flex-direction: column; justify-content: space-between; align-items: center; padding: 4px 0; }
  .foot { display: flex; align-items: center; height: 15px; padding: 0 11px 0 2px; gap: 6px; border-top: 1px solid #242424; flex: none; }
  .depth { font-size: 8px; margin-right: 6px; }
  .hscroll { flex: 1; display: flex; align-items: center; height: 14px; padding: 0 4px; background: #3d3d3d; border: solid #242424; border-width: 0 1px; gap: 6px; }
  .hscroll i { width: 31px; height: 14px; background: #474747; border: 1px solid #262626; }

  .crumbs { flex: none; height: 20px; padding: 2px 0 0 14px; border-bottom: 1px solid #262626; }
  .crumbs button { height: 13px; width: 42px; background: #2c2c2c; border: 1px solid #141414; color: #ccc; font: 8px/10px var(--wide); }
  .stage { flex: 1; min-height: 0; display: flex; align-items: center; justify-content: center; }
  .canvas { width: 87%; aspect-ratio: 16 / 9; background: conic-gradient(#cbcbcb 25%, #fff 0 50%, #cbcbcb 0 75%, #fff 0) 0 0 / calc(100% / 41) calc(100% / 23); }
  .viewbar { flex: none; display: flex; align-items: center; height: 19px; padding: 0 13px 0 2px; gap: 4px; border-top: 1px solid #2a2a2a; }
  .viewbar .hot { height: 12px; }
  .channels { margin-right: 4px; }
  .extras { flex: 1; display: flex; align-items: center; justify-content: space-between; padding-left: 5px; }
  .pressed { width: 14px; height: 13px; background: #252525; border: 1px solid #151515; flex: none; }
  .zoomdrop { width: 53px; } .resdrop { width: 64px; } .camdrop { width: 80px; } .viewdrop { width: 53px; }
  .viewbar .drop select { font: 8px/10px var(--wide); }
  .time { width: 52px; height: 13px; background: #444; border: 1px solid #242424; font: 8px/10px "DejaVu Sans", sans-serif; }

  .timeline { flex: 236 1 0; min-height: 0; display: flex; flex-direction: column; }
  .comps { border-bottom: 0; height: 14px; }
  .comps .tab { justify-content: flex-start; padding-left: 8px; gap: 3px; font: 8px/10px var(--wide); }
  .comps .swatch { width: 9px; }
  .comps .current { width: 60px; margin-bottom: -1px; padding-left: 1px; gap: 2px; border: 1px solid #a67c2c; border-bottom: 0; }
  .comps .current .grip { height: 8px; margin: 0; }
  .frame { flex: 1; min-height: 0; display: flex; border: solid #956c25; border-width: 1px 2px 0 1px; background: #414141; }
  .layers { width: 415px; flex: none; display: flex; flex-direction: column; border-right: 1px solid #222; }
  .controls { display: flex; align-items: center; height: 28px; padding-left: 7px; }
  .clock { width: 75px; }
  .now { font-size: 13px; line-height: 13px; color: #dc9c14; border-bottom: 1px dotted #91661a; height: 15px; }
  .clock small { display: block; font-size: 7px; line-height: 9px; padding-left: 3px; color: #b98425; }
  .seek { width: 134px; }
  .switches { flex: 1; display: flex; justify-content: space-between; padding: 0 9px 0 10px; }
  .shy, .brain { margin-left: 6px; }
  .heads { display: flex; align-items: center; height: 15px; background: #474747; border: solid #242424; border-width: 1px 0; font: 8px/10px "Liberation Sans", Arial, sans-serif; padding-left: 4px; flex: none; }
  .c { display: flex; align-items: center; height: 10px; border-left: 1px solid #2a2a2a; padding-left: 4px; }
  .heads em { margin-left: 6px; }
  .labels { width: 50px; padding-left: 9px; }
  .source { width: 102px; }
  .modes { width: 108px; position: relative; }
  .modes .fx { position: absolute; left: 39px; font: italic 10px/10px "Liberation Serif", serif; }
  .parent { flex: 1; margin-right: 12px; border-right: 1px solid #2a2a2a; }
  .void { flex: 1; }
  .tracks { position: relative; flex: 1; min-width: 0; display: flex; flex-direction: column; overflow: hidden; }
  .navigator, .workarea { display: flex; justify-content: space-between; background: #7c7a7c; }
  .navigator { height: 7px; margin: 4px 0 1px; }
  .navigator i, .workarea i { width: 5px; background: #b47d12; border: 1px solid #4e390c; }
  .navigator i:first-child { border-radius: 4px 0 0 0; }
  .navigator i:last-child { border-radius: 0 4px 0 0; }
  .ruler { display: flex; justify-content: space-between; height: 16px; margin: 0 -3px 0 -6px; font-size: 8px; line-height: 13px; }
  .ruler span { width: 24px; text-align: center; background: linear-gradient(#888, #888) 50% 100% / 1px 3px no-repeat; }
  .workarea { height: 12px; border-top: 1px solid #222; box-sizing: content-box; }
  .cache { height: 2px; background: #12ad36; margin: 0 5px; }
  .lane { flex: 1; background: #4c4c4c; margin-right: 5px; border-top: 1px solid #2d2d2d; }
  .playline { position: absolute; left: 6px; top: 3px; bottom: 0; width: 1px; background: #b3362a; z-index: 1; }
  .playhead { position: absolute; left: 1px; top: 15px; z-index: 2; }
  .gutter { width: 12px; flex: none; display: flex; flex-direction: column; align-items: center; padding-top: 27px; gap: 4px; border-left: 1px solid #2a2a2a; }

  aside { width: 161px; flex: none; display: flex; flex-direction: column; }
  .info { height: 104px; margin-bottom: 4px; }
  .w32 { width: 32px; } .w44 { width: 44px; } .w42 { width: 44px; } .w76 { width: 78px; } .w50 { width: 50px; } .w58 { width: 58px; } .w66 { width: 66px; }
  .w76, .w66 { font: 8px/10px var(--wide); }
  .w76 b, .w66 b { margin-left: 2px; }
  .w50 { border-right: 0; font: 8px/10px var(--wide); }
  .readout { display: flex; height: 50px; padding-top: 4px; margin: 0 8px 0 5px; }
  .chip { width: 15px; height: 15px; background: #000; margin-top: 9px; flex: none; }
  dl { display: grid; grid-template-columns: 17px 1fr; width: 58px; padding-left: 4px; align-content: start; height: 40px; border-right: 1px solid #2b2b2b; }
  dt, dd { font: 8px/10px var(--wide); }
  .pos { display: flex; gap: 4px; padding-left: 5px; white-space: nowrap; font: 8px/10px "DejaVu Sans", sans-serif; }
  .pos svg { margin-top: 14px; }
  .region { margin: 0 8px 0 4px; border-top: 1px solid #2b2b2b; padding-top: 4px; font: 8px/11px var(--wide); white-space: nowrap; }
  .preview { height: 36px; }
  .transport { flex: 1; display: flex; align-items: center; justify-content: space-between; padding: 0 3px 0 8px; }
  .mute { margin-left: 3px; }
  .slider { height: 3px; background: #4e4e4e; border-radius: 1px; flex: none; }
  .slider.one { width: 115px; margin: 4px 0 3px 1px; }
  .slider.two { width: 128px; margin: 4px 0 1px 1px; }
  .effects { flex: 305 1 0; }
  .filter { margin: 3px 5px 3px 4px; height: 14px; font: 8px/10px var(--wide); flex: none; }
  .filter input { margin-left: 5px; }
  .browser { flex: 1; min-height: 0; display: flex; border: solid #242424; border-width: 1px 0; }
  .browser ul { flex: 1; list-style: none; height: 132px; display: flex; flex-direction: column; font: 8px/10px var(--wide); }
  .browser li { flex: 1; display: flex; align-items: center; gap: 3px; padding-left: 3px; border-bottom: 1px solid #3b3b3b; white-space: nowrap; }
  .browser li.d1 { padding-left: 16px; gap: 3px; }
  .browser li.d2 { padding-left: 26px; gap: 4px; }
  .browser li.d3 { padding-left: 41px; gap: 2px; }
  .browser li.selected { background: #4e4e4e; }
  .browser li.selected span { background: #b0b0b0; color: #151515; padding-right: 4px; }
  .browser .track { width: 13px; flex: none; border-left: 1px solid #2a2a2a; }
  .effects footer { height: 12px; display: flex; align-items: center; justify-content: flex-end; padding-right: 18px; flex: none; }
  .sketch { flex: 232 1 0; }
  .form { display: grid; grid-template-columns: 83px 1fr; column-gap: 5px; grid-template-rows: repeat(4, 15px) 16px 12px; align-items: center; padding-top: 8px; font: 8px/10px var(--wide); white-space: nowrap; }
  .k { text-align: right; }
  .form label { display: flex; align-items: center; gap: 2px; }
  .form input { appearance: none; position: relative; width: 10px; height: 10px; border: 1px solid #222; background: #3a3a3a; box-shadow: inset 0 0 0 1px #484848; }
  .form input:checked::after { content: ""; position: absolute; left: 2px; top: 0; width: 3px; height: 5px; border: solid #ddd; border-width: 0 1px 1px 0; transform: rotate(40deg); }
  .capture { align-self: flex-end; width: 70px; height: 14px; margin: 5px 8px 0 0; border: 1px solid #353535; color: #686868; font: 8px/10px var(--wide); }

  .note { position: absolute; left: 470px; top: 440px; width: 212px; pointer-events: none; }
  .box { position: absolute; left: 58px; top: 0; width: 35px; height: 38px; border: 6px solid #00ee00; border-radius: 2px; }
  .arrow { position: absolute; left: 64px; top: 45px; }
  .note p { position: absolute; left: 0; top: 137px; font: 700 25px/28px "Liberation Sans", Arial, sans-serif; color: #00ee00; white-space: nowrap; -webkit-text-stroke: 5px #0b0b0b; paint-order: stroke fill; }
</style>
